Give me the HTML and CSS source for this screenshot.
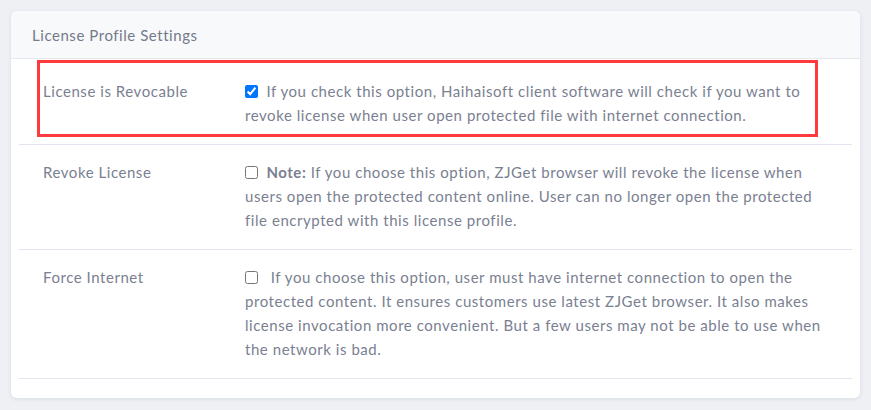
FILE: index.html
```html
<!DOCTYPE html>
<html lang="en">
<head>
<meta charset="utf-8">
<title>License Profile Settings</title>
<link rel="stylesheet" href="styles.css">
</head>
<body>
<div class="card">
  <div class="card-header">License Profile Settings</div>
  <div class="card-body">
    <div class="row row-marked">
      <div class="label">License is Revocable</div>
      <div class="content"><input type="checkbox" checked> If you check this option, Haihaisoft client software will check if you want to revoke license when user open protected file with internet connection.</div>
      <div class="highlight"></div>
    </div>
    <div class="row">
      <div class="label">Revoke License</div>
      <div class="content"><input type="checkbox"> <b>Note:</b> If you choose this option, ZJGet browser will revoke the license when users open the protected content online. User can no longer open the protected file encrypted with this license profile.</div>
    </div>
    <div class="row">
      <div class="label">Force Internet</div>
      <div class="content"><input type="checkbox">&nbsp; If you choose this option, user must have internet connection to open the protected content. It ensures customers use latest ZJGet browser. It also makes license invocation more convenient. But a few users may not be able to use when the network is bad.</div>
    </div>
  </div>
</div>
</body>
</html>
```
FILE: styles.css
```css
html, body {
  margin: 0;
  padding: 0;
}
body {
  background: #eef0f4;
  font-family: Lato, "Open Sans", sans-serif;
  font-size: 15px;
  letter-spacing: 0.55px;
  color: #7a7f91;
  padding: 11px 11px 12px 11px;
}
.card {
  background: #ffffff;
  border-radius: 6px;
  box-shadow: 0 1px 4px rgba(60, 70, 100, 0.12);
  overflow: hidden;
}
.card-header {
  background: #f8f9fb;
  border-bottom: 1px solid #e6e8f0;
  height: 48px;
  box-sizing: border-box;
  display: flex;
  align-items: center;
  padding: 0 21px;
  color: #747a8a;
}
.card-body {
  padding: 5px 8px 19px 8px;
}
.row {
  display: grid;
  grid-template-columns: 202px 1fr;
  border-bottom: 1px solid #e2e4ee;
  line-height: 24px;
  position: relative;
}
.label {
  padding: 15px 0 17px 24px;
}
.content {
  padding: 15px 24px 17px 24px;
}
.content b {
  font-weight: 700;
  color: #7a7f91;
}
input[type="checkbox"] {
  width: 13px;
  height: 13px;
  margin: 0 4px 0 0;
  vertical-align: -1px;
}
.highlight {
  position: absolute;
  left: 18px;
  top: -4px;
  width: 781px;
  height: 77px;
  box-sizing: border-box;
  border: 3px solid #fd3a3d;
  pointer-events: none;
}
```
